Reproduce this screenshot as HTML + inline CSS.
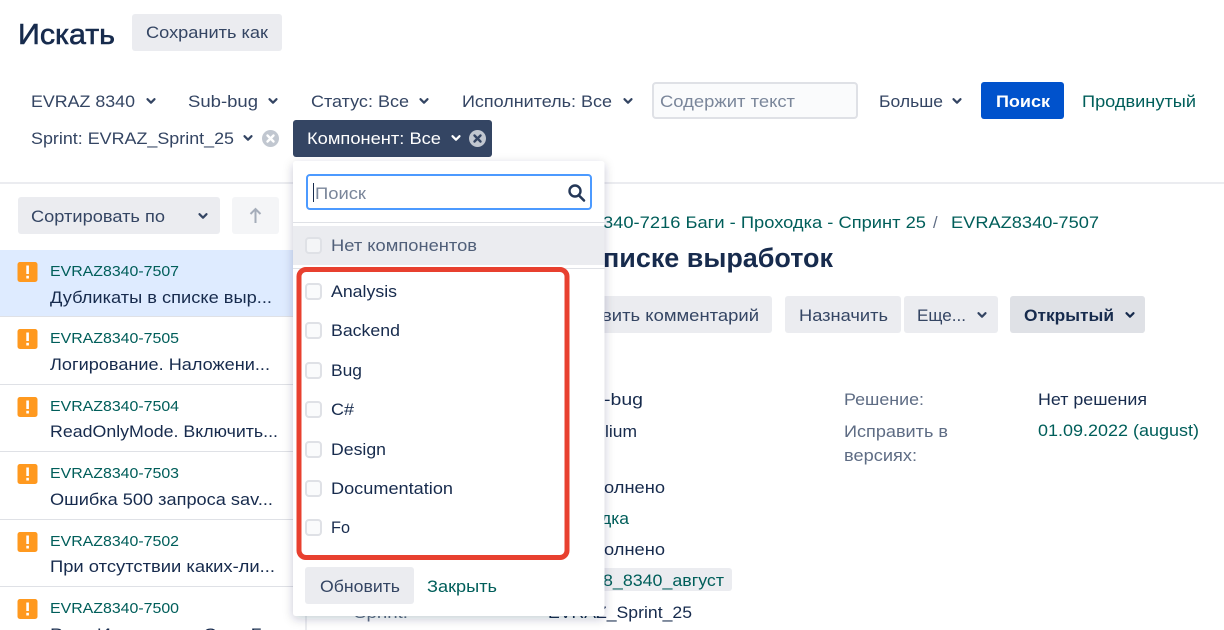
<!DOCTYPE html>
<html lang="ru"><head><meta charset="utf-8"><title>Искать</title>
<style>
html,body{margin:0;padding:0;background:#fff;overflow:hidden}
svg{display:block}
text{font-family:"Liberation Sans",sans-serif;font-size:16.5px;fill:#172b4d}
.b{fill:#344563}.l{fill:#005e5a}.g{fill:#5e6c84}.p{fill:#7a869a}
.k{font-size:15px}
.chev{fill:none;stroke:#344563;stroke-width:2.2;stroke-linecap:round;stroke-linejoin:round}
.cb{fill:#fafbfc;stroke:#dfe1e6;stroke-width:2}
</style></head><body>
<svg width="1224" height="630" viewBox="0 0 1224 630" xmlns="http://www.w3.org/2000/svg">
<defs>
<filter id="sh" x="-10%" y="-10%" width="120%" height="120%"><feDropShadow dx="0" dy="3" stdDeviation="5" flood-color="#091e42" flood-opacity=".22"/></filter>
<g id="bug"><rect width="20" height="20" rx="2.5" fill="#ff991f"/><rect x="8.8" y="3.5" width="2.6" height="8.5" fill="#fff"/><rect x="8.8" y="13.8" width="2.6" height="2.7" fill="#fff"/></g>
<path id="c" class="chev" d="M-3.5-1.800l3.500 3.500 3.500-3.500"/>
</defs>

<!-- header -->
<text x="18" y="44" lengthAdjust="spacingAndGlyphs" textLength="97" style="font-size:29px;stroke:#172b4d;stroke-width:.6">Искать</text>
<rect x="132" y="14" width="150" height="37" rx="3" fill="#ebecf0"/>
<text class="b" x="146" y="38" lengthAdjust="spacingAndGlyphs" textLength="122">Сохранить как</text>

<!-- filters -->
<text class="b" x="31" y="107" lengthAdjust="spacingAndGlyphs" textLength="104">EVRAZ 8340</text><use href="#c" x="151" y="101"/>
<text class="b" x="188" y="107" lengthAdjust="spacingAndGlyphs" textLength="70">Sub-bug</text><use href="#c" x="273" y="101"/>
<text class="b" x="311" y="107" lengthAdjust="spacingAndGlyphs" textLength="98">Статус: Все</text><use href="#c" x="424" y="101"/>
<text class="b" x="462" y="107" lengthAdjust="spacingAndGlyphs" textLength="150">Исполнитель: Все</text><use href="#c" x="628" y="101"/>
<rect x="653" y="83" width="204" height="35" rx="3" fill="#fafbfc" stroke="#dfe1e6" stroke-width="2"/>
<text class="p" x="660" y="107" lengthAdjust="spacingAndGlyphs" textLength="135">Содержит текст</text>
<text class="b" x="879" y="107" lengthAdjust="spacingAndGlyphs" textLength="64">Больше</text><use href="#c" x="957" y="101"/>
<rect x="981" y="82" width="83" height="37" rx="3" fill="#0052cc"/>
<text x="996" y="107" lengthAdjust="spacingAndGlyphs" textLength="54" style="fill:#fff;font-weight:bold">Поиск</text>
<text class="l" x="1082" y="107" lengthAdjust="spacingAndGlyphs" textLength="114">Продвинутый</text>

<text class="b" x="31" y="144" lengthAdjust="spacingAndGlyphs" textLength="203">Sprint: EVRAZ_Sprint_25</text><use href="#c" x="248" y="138"/>
<circle cx="270.500" cy="138.500" r="8.500" fill="#c1c7d0"/>
<path d="M267.500 135.500l6 6m0-6l-6 6" stroke="#fff" stroke-width="2.400" stroke-linecap="round"/>
<rect x="293" y="120" width="199" height="37" rx="3" fill="#344563"/>
<text x="307" y="144" lengthAdjust="spacingAndGlyphs" textLength="134" style="fill:#fff">Компонент: Все</text>
<path class="chev" d="M452.500 136.200l3.500 3.500 3.500-3.500" style="stroke:#fff"/>
<circle cx="477.500" cy="138.500" r="8.500" fill="#c1c7d0"/>
<path d="M474.500 135.500l6 6m0-6l-6 6" stroke="#344563" stroke-width="2.400" stroke-linecap="round"/>

<rect x="0" y="182" width="1224" height="2" fill="#ebecf0"/>
<rect x="305" y="184" width="2" height="446" fill="#ebecf0"/>

<!-- sort -->
<rect x="18" y="197" width="202" height="37" rx="3" fill="#ebecf0"/>
<text class="b" x="31" y="222" lengthAdjust="spacingAndGlyphs" textLength="134">Сортировать по</text><use href="#c" x="203" y="216"/>
<rect x="232" y="197" width="47" height="37" rx="3" fill="#f4f5f7"/>
<path d="M255.500 223v-14m-5 5l5-5 5 5" fill="none" stroke="#a5adba" stroke-width="2"/>

<!-- list -->
<rect x="0" y="250" width="305" height="66" fill="#deebff"/>
<g fill="#dfe1e6">
<rect x="0" y="316" width="305" height="1"/><rect x="0" y="384" width="305" height="1"/><rect x="0" y="451" width="305" height="1"/><rect x="0" y="519" width="305" height="1"/><rect x="0" y="586" width="305" height="1"/>
</g>
<use href="#bug" x="17.500" y="262"/><use href="#bug" x="17.500" y="329"/><use href="#bug" x="17.500" y="397"/><use href="#bug" x="17.500" y="464"/><use href="#bug" x="17.500" y="532"/><use href="#bug" x="17.500" y="599"/>
<text class="l k" x="50" y="276" lengthAdjust="spacingAndGlyphs" textLength="129">EVRAZ8340-7507</text>
<text x="50" y="303" lengthAdjust="spacingAndGlyphs" textLength="222">Дубликаты в списке выр...</text>
<text class="l k" x="50" y="343" lengthAdjust="spacingAndGlyphs" textLength="129">EVRAZ8340-7505</text>
<text x="50" y="370" lengthAdjust="spacingAndGlyphs" textLength="220">Логирование. Наложени...</text>
<text class="l k" x="50" y="411" lengthAdjust="spacingAndGlyphs" textLength="129">EVRAZ8340-7504</text>
<text x="50" y="437" lengthAdjust="spacingAndGlyphs" textLength="228">ReadOnlyMode. Включить...</text>
<text class="l k" x="50" y="478" lengthAdjust="spacingAndGlyphs" textLength="129">EVRAZ8340-7503</text>
<text x="50" y="505" lengthAdjust="spacingAndGlyphs" textLength="223">Ошибка 500 запроса sav...</text>
<text class="l k" x="50" y="546" lengthAdjust="spacingAndGlyphs" textLength="129">EVRAZ8340-7502</text>
<text x="50" y="572" lengthAdjust="spacingAndGlyphs" textLength="225">При отсутствии каких-ли...</text>
<text class="l k" x="50" y="613" lengthAdjust="spacingAndGlyphs" textLength="129">EVRAZ8340-7500</text>
<text x="50" y="640" lengthAdjust="spacingAndGlyphs" textLength="225">Рост Изменение Сего Г...</text>

<!-- issue -->
<text class="l" x="603" y="228" lengthAdjust="spacingAndGlyphs" textLength="323">340-7216 Баги - Проходка - Спринт 25</text>
<text class="g" x="933" y="228">/</text>
<text class="l" x="951" y="228" lengthAdjust="spacingAndGlyphs" textLength="148">EVRAZ8340-7507</text>
<text x="603" y="267" lengthAdjust="spacingAndGlyphs" textLength="230" style="font-size:27px;font-weight:bold">писке выработок</text>
<rect x="560" y="296" width="212" height="37" rx="3" fill="#ebecf0"/>
<text class="b" x="602" y="321" lengthAdjust="spacingAndGlyphs" textLength="157">вить комментарий</text>
<rect x="785" y="296" width="116" height="37" rx="3" fill="#ebecf0"/>
<text class="b" x="799" y="321" lengthAdjust="spacingAndGlyphs" textLength="89">Назначить</text>
<rect x="904" y="296" width="94" height="37" rx="3" fill="#ebecf0"/>
<text class="b" x="917" y="321" lengthAdjust="spacingAndGlyphs" textLength="49">Еще...</text><use href="#c" x="982" y="315"/>
<rect x="1010" y="296" width="135" height="37" rx="3" fill="#dfe1e6"/>
<text x="1024" y="321" lengthAdjust="spacingAndGlyphs" textLength="90" style="font-weight:bold">Открытый</text>
<path class="chev" d="M1126.500 313.200l3.500 3.500 3.500-3.500" style="stroke:#172b4d"/>

<text x="604" y="405" lengthAdjust="spacingAndGlyphs" textLength="39">-bug</text>
<text x="605" y="437" lengthAdjust="spacingAndGlyphs" textLength="32">lium</text>
<text x="604" y="493" lengthAdjust="spacingAndGlyphs" textLength="61">олнено</text>
<text class="l" x="601" y="524" lengthAdjust="spacingAndGlyphs" textLength="28">дка</text>
<text x="604" y="555" lengthAdjust="spacingAndGlyphs" textLength="61">олнено</text>
<rect x="540" y="568" width="192" height="23" rx="3" fill="#ebecf0"/>
<text class="l" x="603" y="586" lengthAdjust="spacingAndGlyphs" textLength="121">8_8340_август</text>
<text class="g" x="354" y="618" lengthAdjust="spacingAndGlyphs" textLength="54">Sprint:</text>
<text x="548" y="618" lengthAdjust="spacingAndGlyphs" textLength="144">EVRAZ_Sprint_25</text>

<text class="g" x="844" y="405" lengthAdjust="spacingAndGlyphs" textLength="80">Решение:</text>
<text x="1038" y="405" lengthAdjust="spacingAndGlyphs" textLength="109">Нет решения</text>
<text class="g" x="844" y="437" lengthAdjust="spacingAndGlyphs" textLength="104">Исправить в</text>
<text class="g" x="844" y="461" lengthAdjust="spacingAndGlyphs" textLength="73">версиях:</text>
<text class="l" x="1038" y="436" lengthAdjust="spacingAndGlyphs" textLength="161">01.09.2022 (august)</text>

<!-- dropdown -->
<rect x="293" y="161" width="311.500" height="455" rx="3" fill="#fff" filter="url(#sh)"/>
<rect x="307" y="175" width="284" height="34" rx="3" fill="#fff" stroke="#4c9aff" stroke-width="2"/>
<rect x="313" y="183" width="1" height="19" fill="#172b4d"/>
<text class="p" x="315" y="199" lengthAdjust="spacingAndGlyphs" textLength="51">Поиск</text>
<circle cx="575" cy="191" r="5.500" fill="none" stroke="#253858" stroke-width="2.400"/>
<path d="M579 195.500l5 5" stroke="#253858" stroke-width="2.600" stroke-linecap="round"/>
<rect x="293" y="222" width="311.500" height="1" fill="#dfe1e6"/>
<rect x="293" y="226" width="311.500" height="39" fill="#ebecf0"/>
<rect x="293" y="268" width="311.500" height="1" fill="#dfe1e6"/>
<rect x="306" y="238" width="15" height="15" rx="3" fill="#f4f5f7" stroke="#dfe1e6" stroke-width="2"/>
<text x="331" y="251" lengthAdjust="spacingAndGlyphs" textLength="146" style="fill:#505f79">Нет компонентов</text>

<rect class="cb" x="306" y="284" width="15" height="15" rx="3"/>
<text x="331" y="297" lengthAdjust="spacingAndGlyphs" textLength="66">Analysis</text>
<rect class="cb" x="306" y="323" width="15" height="15" rx="3"/>
<text x="331" y="336" lengthAdjust="spacingAndGlyphs" textLength="69">Backend</text>
<rect class="cb" x="306" y="363" width="15" height="15" rx="3"/>
<text x="331" y="376" lengthAdjust="spacingAndGlyphs" textLength="31">Bug</text>
<rect class="cb" x="306" y="402" width="15" height="15" rx="3"/>
<text x="331" y="415" lengthAdjust="spacingAndGlyphs" textLength="23">C#</text>
<rect class="cb" x="306" y="442" width="15" height="15" rx="3"/>
<text x="331" y="455" lengthAdjust="spacingAndGlyphs" textLength="55">Design</text>
<rect class="cb" x="306" y="481" width="15" height="15" rx="3"/>
<text x="331" y="494" lengthAdjust="spacingAndGlyphs" textLength="122">Documentation</text>
<rect class="cb" x="306" y="520" width="15" height="15" rx="3"/>
<text x="331" y="533" lengthAdjust="spacingAndGlyphs" textLength="19">Fo</text>

<rect x="299" y="269.500" width="268" height="288" rx="7" fill="none" stroke="#e8402f" stroke-width="5"/>

<rect x="305" y="567" width="109" height="37" rx="3" fill="#ebecf0"/>
<text class="b" x="320" y="592" lengthAdjust="spacingAndGlyphs" textLength="80">Обновить</text>
<text class="l" x="427" y="592" lengthAdjust="spacingAndGlyphs" textLength="70">Закрыть</text>
</svg>
</body></html>
